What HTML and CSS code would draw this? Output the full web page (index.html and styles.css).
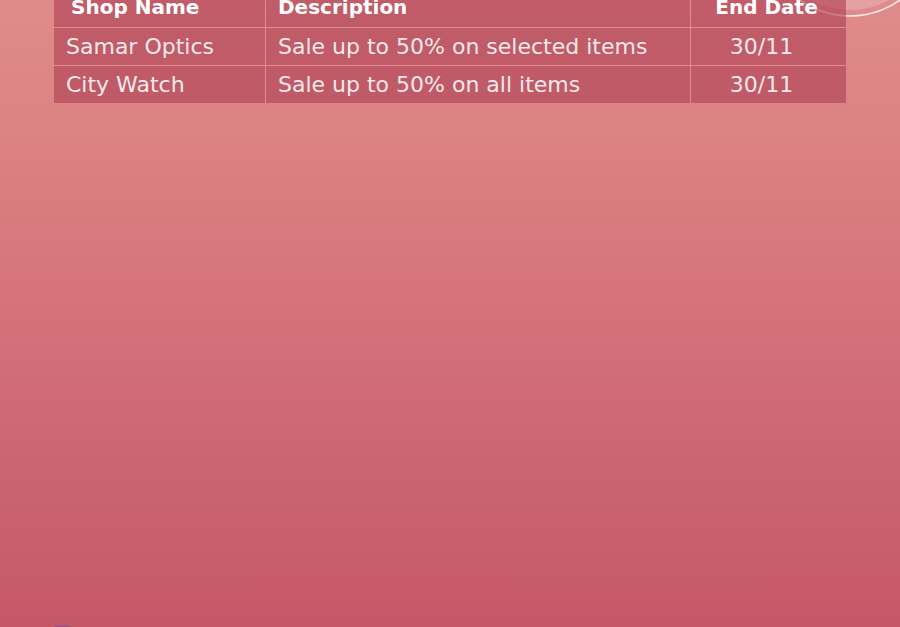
FILE: index.html
```html
<!DOCTYPE html>
<html lang="en">
<head>
<meta charset="utf-8">
<title>Offers</title>
<link rel="stylesheet" href="styles.css">
</head>
<body>
<div class="page">
  <svg class="deco" width="200" height="60" viewBox="0 0 200 60" aria-hidden="true">
    <circle cx="150" cy="-70" r="80" fill="rgba(255,255,255,0.18)"/>
    <circle cx="150" cy="-70" r="86" fill="none" stroke="rgba(255,255,255,0.8)" stroke-width="1.5"/>
  </svg>
  <table class="offers">
    <thead>
      <tr><th class="c-shop">Shop Name</th><th class="c-desc">Description</th><th class="c-date">End Date</th></tr>
    </thead>
    <tbody>
      <tr><td class="c-shop">Samar Optics</td><td class="c-desc">Sale up to 50% on selected items</td><td class="c-date">30/11</td></tr>
      <tr><td class="c-shop">City Watch</td><td class="c-desc">Sale up to 50% on all items</td><td class="c-date">30/11</td></tr>
    </tbody>
  </table>
  <div class="blip"></div>
</div>
</body>
</html>
```
FILE: styles.css
```css
html, body {
  margin: 0;
  padding: 0;
}
body {
  width: 900px;
  height: 627px;
  overflow: hidden;
  font-family: "DejaVu Sans", "Open Sans", sans-serif;
}
.page {
  position: relative;
  width: 900px;
  height: 627px;
  background: linear-gradient(180deg, #e08b8b 0%, #db8182 25%, #d4727a 50%, #cc6470 75%, #c55868 100%);
  overflow: hidden;
  padding-top: 1px;
  box-sizing: border-box;
}
.deco {
  position: absolute;
  top: 0;
  left: 700px;
}
.offers {
  position: relative;
  margin: -11px 0 0 54px;
  width: 792px;
  border-collapse: collapse;
  background: rgba(172, 62, 82, 0.6);
  color: #f9e9ec;
}
.offers th, .offers td {
  border: 1px solid rgba(240, 160, 165, 0.7);
  height: 37px;
  padding: 0 12px;
  font-size: 22px;
  line-height: 1;
  text-align: left;
}
.offers th {
  font-weight: bold;
  font-size: 20px;
  color: #ffffff;
  height: 33px;
  padding-bottom: 4px;
}
.offers tr:first-child th {
  border-top: none;
}
.offers th:first-child, .offers td:first-child {
  border-left: none;
}
.offers th:last-child, .offers td:last-child {
  border-right: none;
}
.offers tbody tr:last-child td {
  border-bottom: none;
}
.offers th.c-shop { padding-left: 17px; }
.c-shop { width: 182px; }
.c-desc { width: 400px; }
.offers .c-date { text-align: center; }
.offers th.c-date { padding-right: 16px; }
.offers td.c-date { padding-right: 26px; }
.blip {
  position: absolute;
  left: 52px;
  bottom: -6px;
  width: 22px;
  height: 8px;
  border-radius: 50%;
  background: rgba(140, 70, 150, 0.6);
}
```
